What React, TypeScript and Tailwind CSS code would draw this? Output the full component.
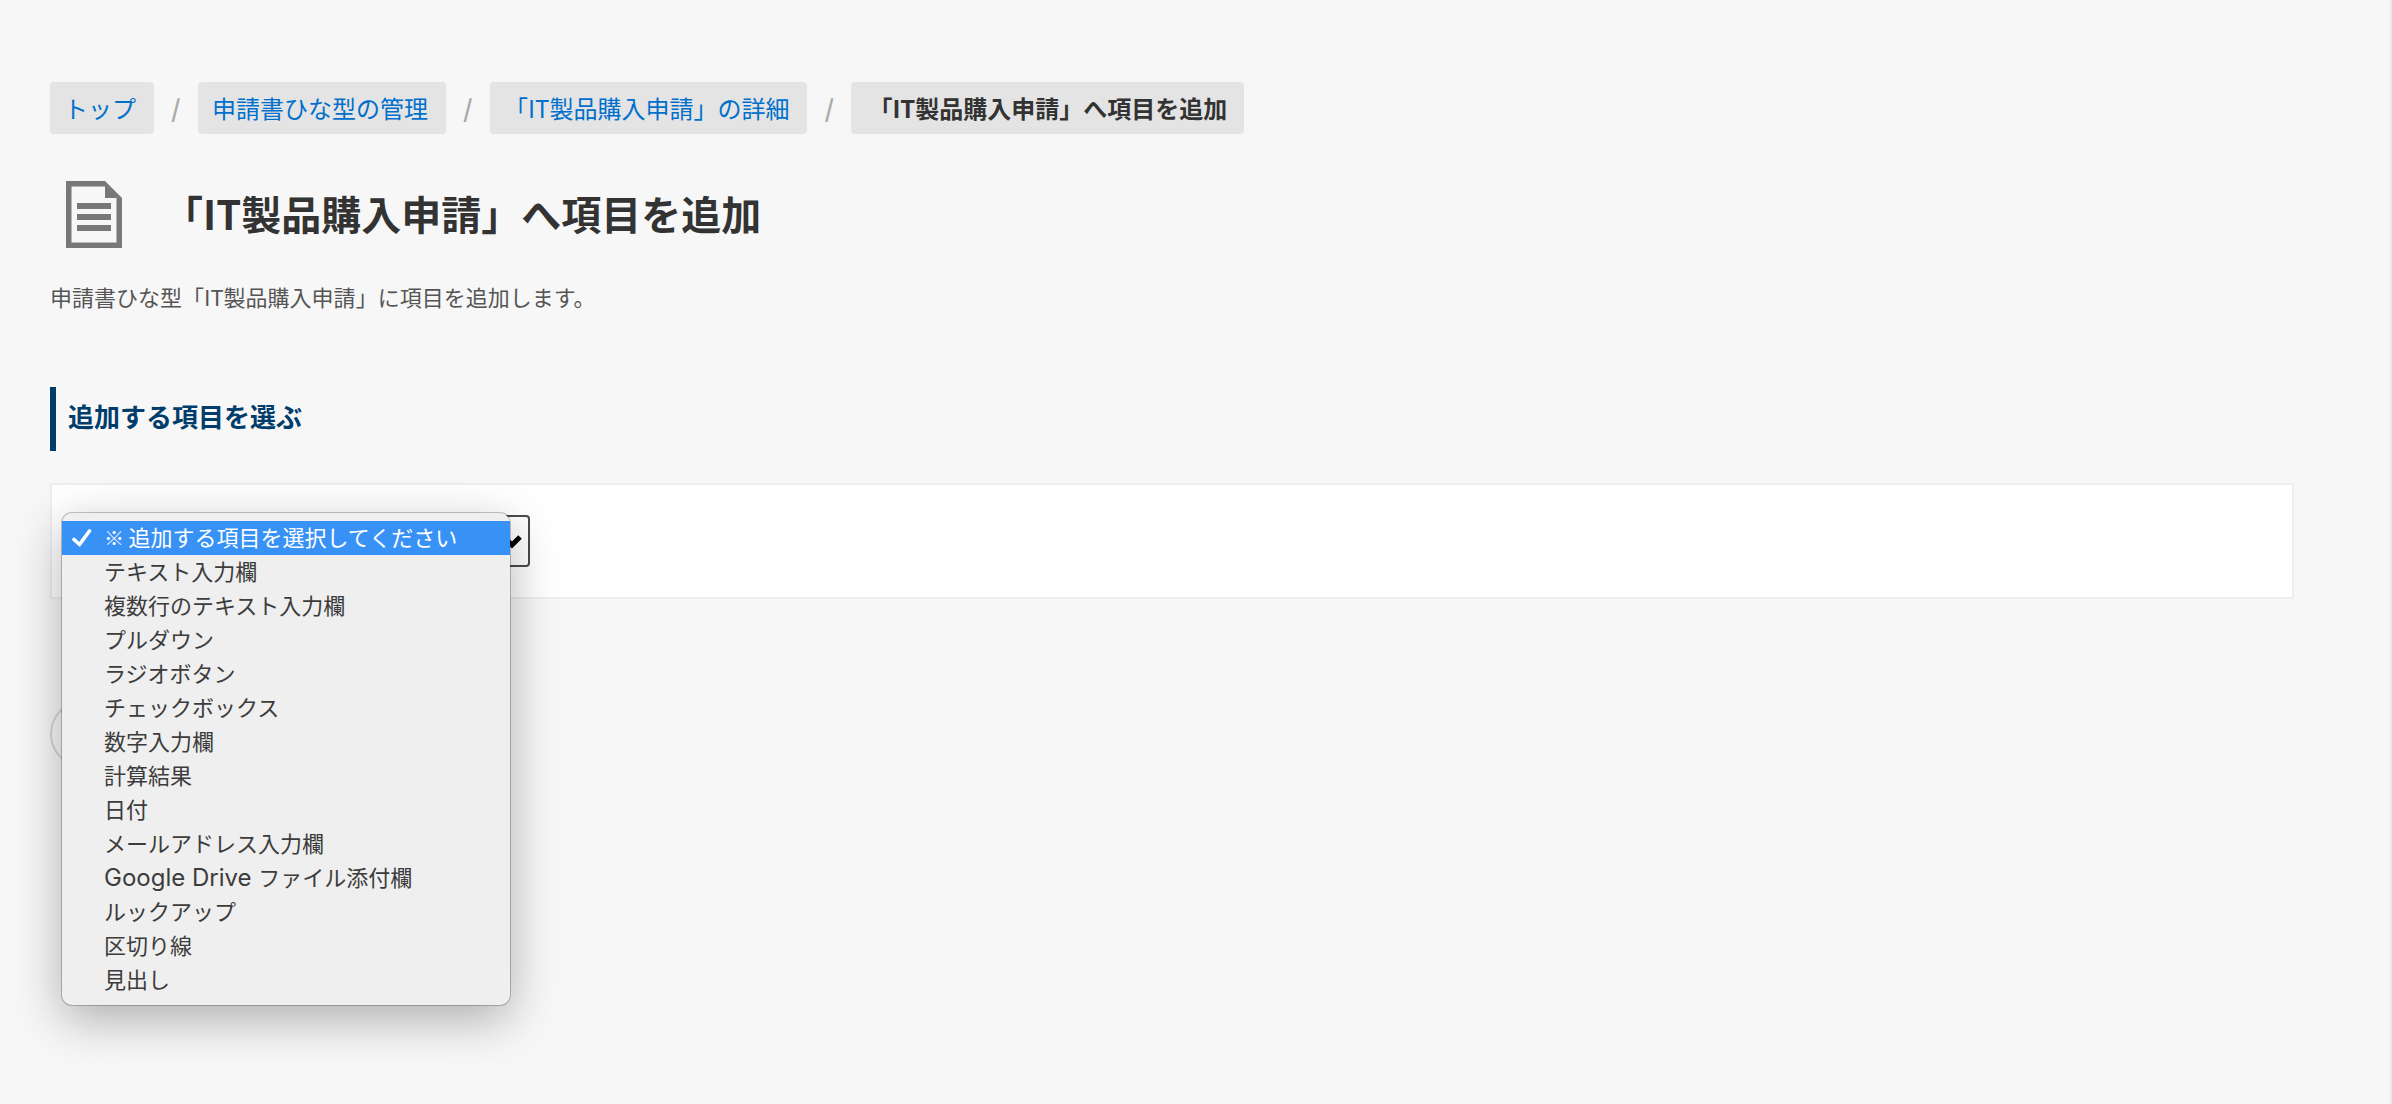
import { useState } from 'react';

const crumbs = [
  { label: 'トップ', href: '#top' },
  { label: '申請書ひな型の管理', href: '#templates' },
  { label: '「IT製品購入申請」の詳細', href: '#detail' },
];

const fieldTypes = [
  { prefix: '※ ', prefixClass: "text-xl font-['Noto_Sans_CJK_JP',sans-serif]", label: '追加する項目を選択してください' },
  { label: 'テキスト入力欄' },
  { label: '複数行のテキスト入力欄' },
  { label: 'プルダウン' },
  { label: 'ラジオボタン' },
  { label: 'チェックボックス' },
  { label: '数字入力欄' },
  { label: '計算結果' },
  { label: '日付' },
  { label: 'メールアドレス入力欄' },
  { prefix: 'Google Drive ', prefixClass: 'text-2xl', label: 'ファイル添付欄' },
  { label: 'ルックアップ' },
  { label: '区切り線' },
  { label: '見出し' },
];

function Breadcrumb() {
  return (
    <nav aria-label="パンくずリスト">
      <ol className="flex flex-wrap items-center text-2xl leading-[52px]">
        {crumbs.map((crumb) => (
          <li key={crumb.href} className="flex">
            <a href={crumb.href} className="rounded bg-[#e4e4e4] pr-[18px] pl-[14px] text-[#0070cc]">
              {crumb.label}
            </a>
            <span className="w-11 text-center font-bold text-[#aaaaaa]" aria-hidden="true">
              /
            </span>
          </li>
        ))}
        <li aria-current="page" className="rounded bg-[#e4e4e4] px-[17px] font-bold text-[#333333]">
          「IT製品購入申請」へ項目を追加
        </li>
      </ol>
    </nav>
  );
}

function DocumentIcon() {
  return (
    <svg viewBox="0 0 56 67" className="h-[67px] w-14 shrink-0" fill="#787878" aria-hidden="true">
      <path
        fillRule="evenodd"
        d="M0 0H39L56 17V67H0ZM5.5 5.5V61.5H50.5V17H39V5.5Z"
      />
      <path d="M11 22H45V28H11ZM11 33H45V39H11ZM11 44H45V50H11Z" />
    </svg>
  );
}

function FieldTypeMenu({ selected, onSelect }: { selected: number; onSelect: (index: number) => void }) {
  return (
    <ul
      role="listbox"
      aria-label="追加する項目"
      className="absolute -top-0.5 left-0 z-10 w-[448px] rounded-[10px] bg-[#efefef] py-2 text-[22px] leading-[34px] text-[#3c3c3c] shadow-[0_0_0_1px_rgba(0,0,0,0.22),0_14px_48px_rgba(0,0,0,0.3)]"
    >
      {fieldTypes.map((type, index) => (
        <li
          key={type.label}
          role="option"
          aria-selected={index === selected}
          onClick={() => onSelect(index)}
          className="flex h-[34px] cursor-default items-center whitespace-pre aria-selected:bg-[#3892f5] aria-selected:text-white"
        >
          <span className="flex w-[42px] shrink-0 pl-2.5">
            {index === selected && (
              <svg viewBox="0 0 20 18" className="h-[18px] w-5" fill="none" aria-hidden="true">
                <path
                  d="M2 10.5L7.5 15.5L17.5 2"
                  stroke="currentColor"
                  strokeWidth="3.6"
                  strokeLinecap="round"
                  strokeLinejoin="round"
                />
              </svg>
            )}
          </span>
          {type.prefix && <span className={type.prefixClass}>{type.prefix}</span>}
          {type.label}
        </li>
      ))}
    </ul>
  );
}

export default function App() {
  const [selected, setSelected] = useState(0);

  return (
    <div className="min-h-screen border-r-2 border-[#e8e8e8] bg-[#f7f7f7] pt-[82px] pr-24 pl-[50px] font-['Noto_Sans_CJK_JP',sans-serif]">
      <Breadcrumb />

      <header className="mt-[47px] flex items-center gap-[41px] pl-4">
        <DocumentIcon />
        <h1 className="pb-1 text-[40px] leading-[60px] font-bold text-[#333333]">
          「IT製品購入申請」へ項目を追加
        </h1>
      </header>
      <p className="mt-8 text-[22px] leading-8 text-[#555555]">
        申請書ひな型「IT製品購入申請」に項目を追加します。
      </p>

      <main>
        <h2 className="mt-[75px] border-l-[6px] border-[#003d6b] pb-1.5 pl-3 text-[26px] leading-[58px] font-bold text-[#003d6b]">
          追加する項目を選ぶ
        </h2>

        <section className="mt-8 border-2 border-[#eeeeee] bg-white px-2.5 py-[30px]">
          <div className="relative font-['Inter','Noto_Sans_CJK_JP',sans-serif]">
            <select
              aria-label="追加する項目を選ぶ"
              value={selected}
              onChange={(event) => setSelected(Number(event.target.value))}
              className="ml-1 block h-[52px] w-[464px] appearance-none rounded border-2 border-[#4a4a4a] bg-white px-3 text-[22px]"
            >
              {fieldTypes.map((type, index) => (
                <option key={type.label} value={index}>
                  {`${type.prefix ?? ''}${type.label}`}
                </option>
              ))}
            </select>
            <svg
              viewBox="0 0 20 14"
              className="pointer-events-none absolute top-5 left-[440px] h-3.5 w-5"
              fill="none"
              aria-hidden="true"
            >
              <path d="M2 2L10 10L18 2" stroke="#000000" strokeWidth="5" />
            </svg>
            <FieldTypeMenu selected={selected} onSelect={setSelected} />
          </div>
        </section>

        <button
          type="button"
          aria-label="戻る"
          className="mt-[101px] block h-[68px] w-60 rounded-full border-2 border-[#d4d4d4] bg-[#f7f7f7]"
        />
      </main>
    </div>
  );
}
